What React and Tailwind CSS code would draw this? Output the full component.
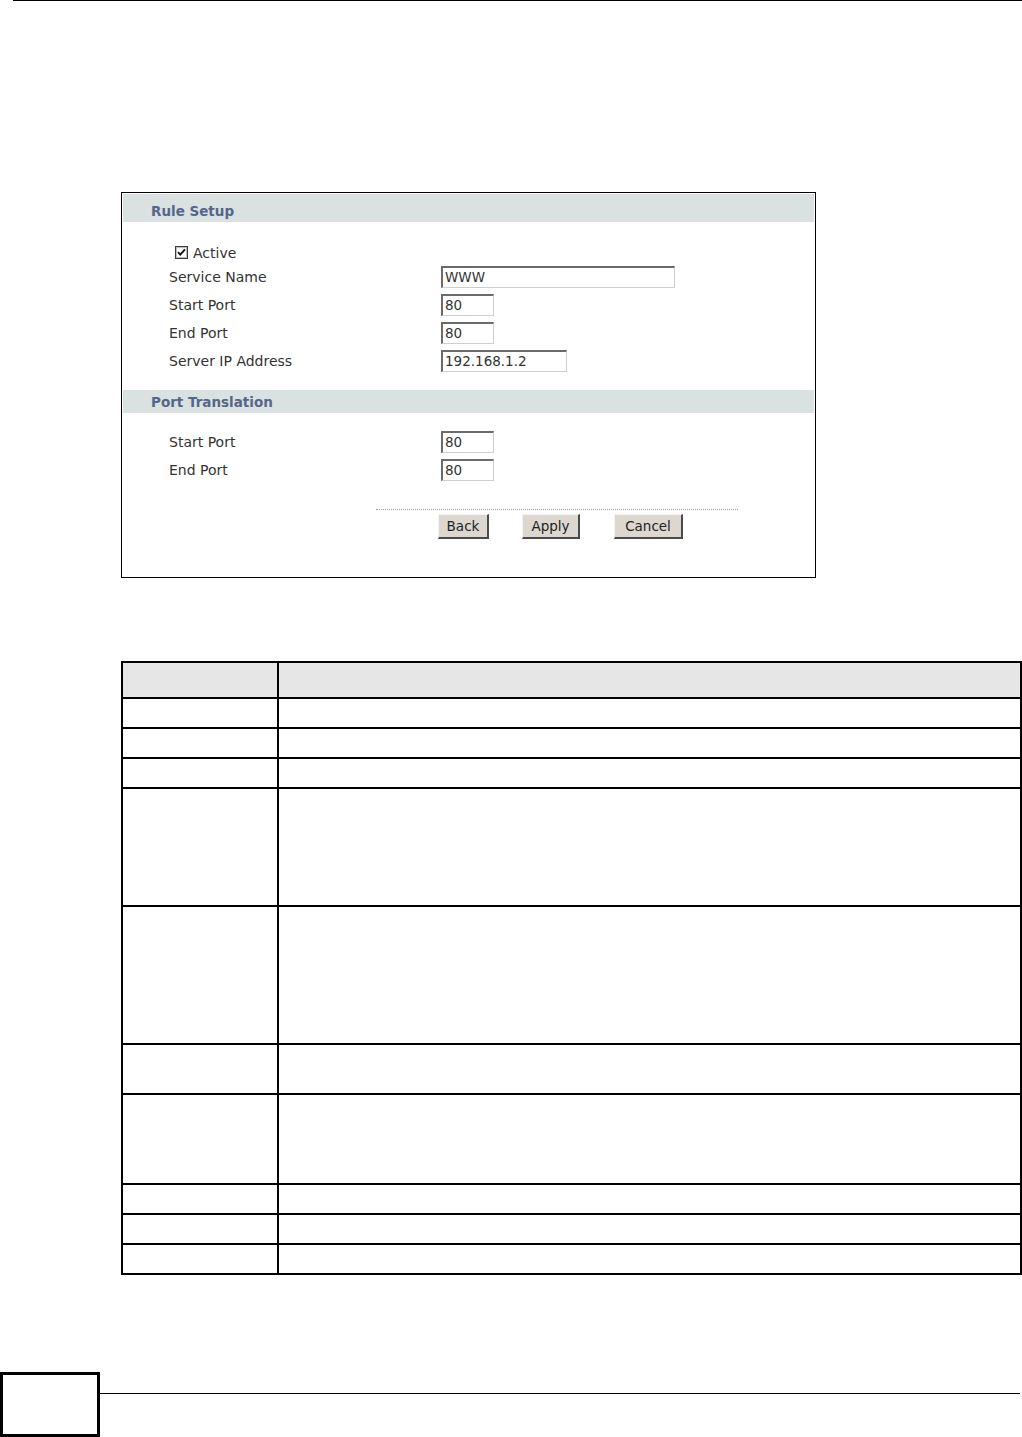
import React from "react";

const font = { fontFamily: '"DejaVu Sans", Verdana, sans-serif' };

function Field({ label, width, value }) {
  return (
    <div className="flex items-start h-[28px]">
      <div className="w-[318px] pl-[46px] leading-[22px] text-[14px] text-[#333333]">{label}</div>
      <div
        className={`h-[22px] ${width} border-t-2 border-l-2 border-t-[#6b6b6b] border-l-[#6b6b6b] border-r border-b border-r-[#cfcfcf] border-b-[#cfcfcf] bg-white pl-[2px] text-[13.5px] leading-[19px] text-[#333333]`}
      >
        {value}
      </div>
    </div>
  );
}

function Band({ title, h, pt }) {
  return (
    <div className={`${h} ${pt} bg-[#d9e1e1] pl-[28px] text-[13.5px] leading-[18px] font-bold text-[#56658a]`}>
      {title}
    </div>
  );
}

function Btn({ children, w }) {
  return (
    <div
      className={`${w} h-[25px] bg-[#dcd8d0] border-t border-l border-t-[#f4f4f4] border-l-[#f4f4f4] border-r-2 border-b-2 border-r-[#4a4a4a] border-b-[#4a4a4a] flex items-center justify-center text-[13.5px] text-[#222222]`}
    >
      {children}
    </div>
  );
}

const rows = [30, 30, 30, 118, 138, 50, 90, 30, 30, 30];

export default function App() {
  return (
    <div className="relative w-[1022px] h-[1437px] bg-white flex flex-col" style={font}>
      <div className="h-px bg-black ml-[13px]" />

      {/* Screenshot panel */}
      <div className="ml-[121px] mt-[191px] w-[695px] h-[386px] border border-black p-px flex flex-col">
        <Band title="Rule Setup" h="h-[28px]" pt="pt-[8px]" />
        <div className="h-[18px]" />
        <div className="flex items-center h-[26px] pl-[52px] text-[14px] text-[#333333]">
          <svg width="13" height="13" viewBox="0 0 13 13" className="mr-[5px] -mt-[2px]">
            <rect x="0.5" y="0.5" width="12" height="12" fill="#fff" stroke="#3a3a3a" />
            <rect x="1.5" y="1.5" width="10" height="10" fill="none" stroke="#bdbdbd" />
            <path d="M3 6.2 L5.3 8.7 L10 3.4" fill="none" stroke="#111" strokeWidth="1.8" />
          </svg>
          Active
        </div>
        <Field label="Service Name" width="w-[234px]" value="WWW" />
        <Field label="Start Port" width="w-[53px]" value="80" />
        <Field label="End Port" width="w-[53px]" value="80" />
        <Field label="Server IP Address" width="w-[126px]" value="192.168.1.2" />
        <div className="h-[12px]" />
        <Band title="Port Translation" h="h-[23px]" pt="pt-[3px]" />
        <div className="h-[18px]" />
        <Field label="Start Port" width="w-[53px]" value="80" />
        <Field label="End Port" width="w-[53px]" value="80" />
        <div className="h-[22px]" />
        <div className="ml-[253px] w-[362px] border-t border-dotted border-[#9a9a9a]" />
        <div className="flex mt-[4px] pl-[315px]">
          <Btn w="w-[51px]">Back</Btn>
          <div className="w-[33px]" />
          <Btn w="w-[58px]">Apply</Btn>
          <div className="w-[34px]" />
          <Btn w="w-[69px]">Cancel</Btn>
        </div>
      </div>

      {/* Table */}
      <div className="ml-[121px] mt-[83px] w-[901px] border-t-2 border-l-2 border-black">
        <div className="flex h-[36px] bg-[#e6e6e6]">
          <div className="w-[156px] border-r-2 border-b-2 border-black" />
          <div className="w-[743px] border-r-2 border-b-2 border-black" />
        </div>
        {rows.map((h, i) => (
          <div key={i} className="flex" style={{ height: h }}>
            <div className="w-[156px] border-r-2 border-b-2 border-black" />
            <div className="w-[743px] border-r-2 border-b-2 border-black" />
          </div>
        ))}
      </div>

      {/* Footer */}
      <div className="mt-auto flex">
        <div className="w-[100px] h-[65px] border-[3px] border-black" />
        <div className="flex-1 mr-[2px] mt-[21px] h-px bg-black" />
      </div>
    </div>
  );
}
